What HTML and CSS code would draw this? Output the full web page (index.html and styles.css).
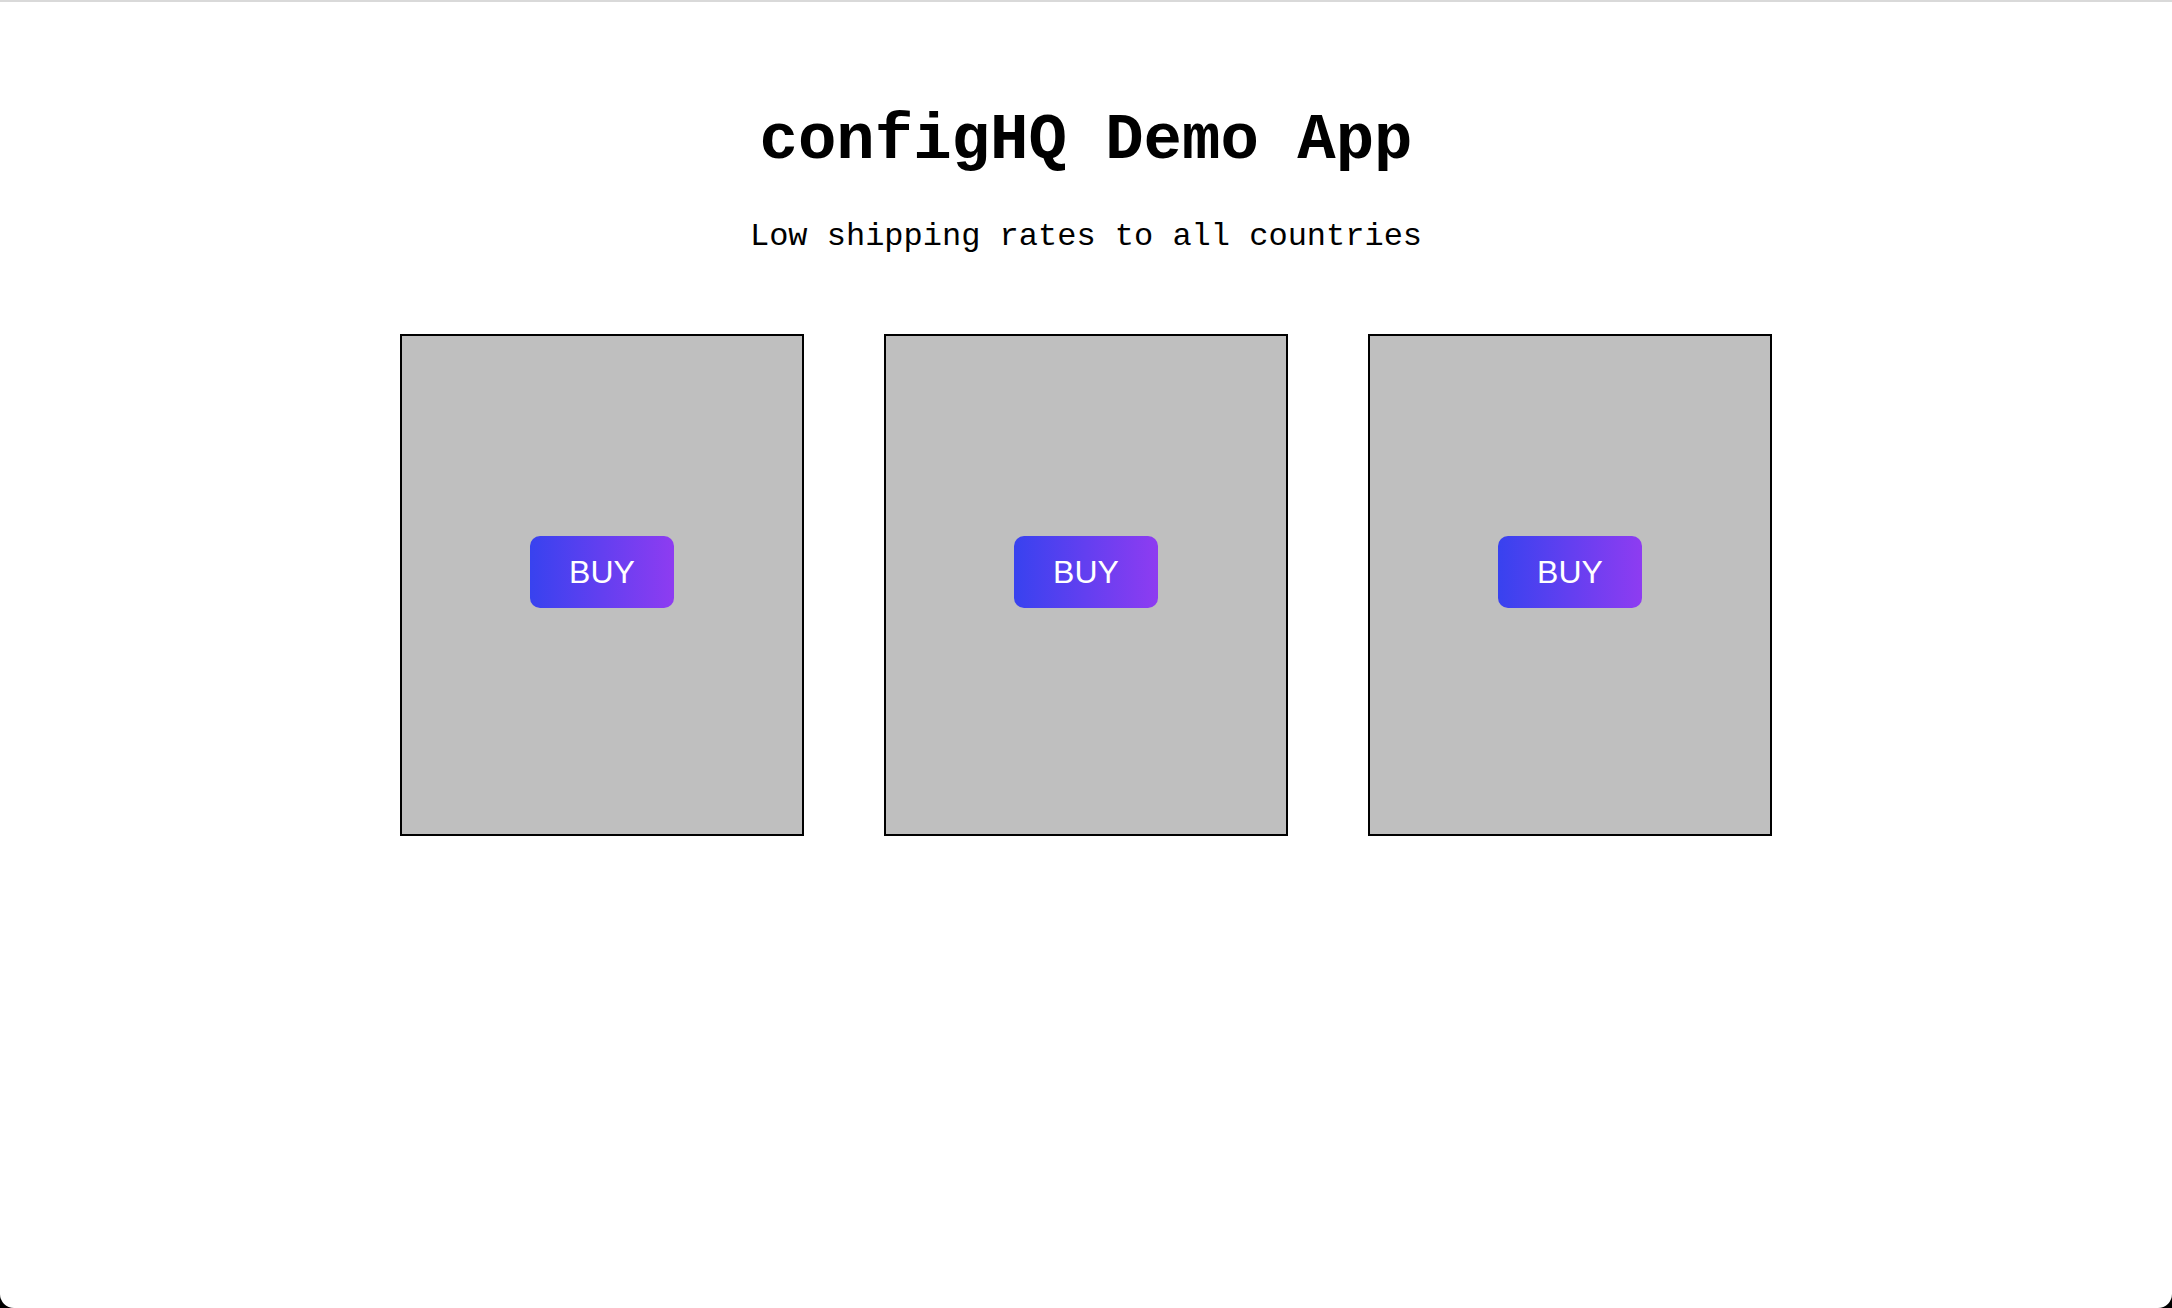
FILE: index.html
```html
<!DOCTYPE html>
<html lang="en">
<head>
<meta charset="utf-8">
<title>configHQ Demo App</title>
<link rel="stylesheet" href="styles.css">
</head>
<body>
<main class="page">
  <h1 class="title">configHQ Demo App</h1>
  <p class="subtitle">Low shipping rates to all countries</p>
  <section class="cards">
    <div class="card"><button class="buy">BUY</button></div>
    <div class="card"><button class="buy">BUY</button></div>
    <div class="card"><button class="buy">BUY</button></div>
  </section>
</main>
</body>
</html>
```

FILE: styles.css
```css
html {
  height: 100%;
  background: #000;
}
body {
  margin: 0;
  height: 100%;
  box-sizing: border-box;
  background: #fff;
  border-top: 2px solid #d9d9d9;
  border-radius: 0 0 14px 14px;
  overflow: hidden;
}
.page {
  display: flex;
  flex-direction: column;
  align-items: center;
  padding-top: 103px;
}
.title {
  margin: 0;
  font-family: "Liberation Mono", "Courier New", monospace;
  font-weight: bold;
  font-size: 64px;
  line-height: 72px;
  color: #000;
}
.subtitle {
  margin: 42px 0 0;
  font-family: "Liberation Mono", "Courier New", monospace;
  font-size: 32px;
  line-height: 36px;
  color: #000;
}
.cards {
  margin-top: 79px;
  display: flex;
  gap: 80px;
}
.card {
  width: 400px;
  height: 298px;
  padding-top: 200px;
  border: 2px solid #000;
  background: #bfbfbf;
  display: flex;
  justify-content: center;
  align-items: flex-start;
}
.buy {
  width: 144px;
  height: 72px;
  border: none;
  border-radius: 10px;
  background: linear-gradient(90deg, #3842ef 0%, #8e3cf1 100%);
  color: #fff;
  font-family: "Liberation Sans", Arial, Helvetica, sans-serif;
  font-size: 32px;
  padding: 0;
  cursor: pointer;
}
```
